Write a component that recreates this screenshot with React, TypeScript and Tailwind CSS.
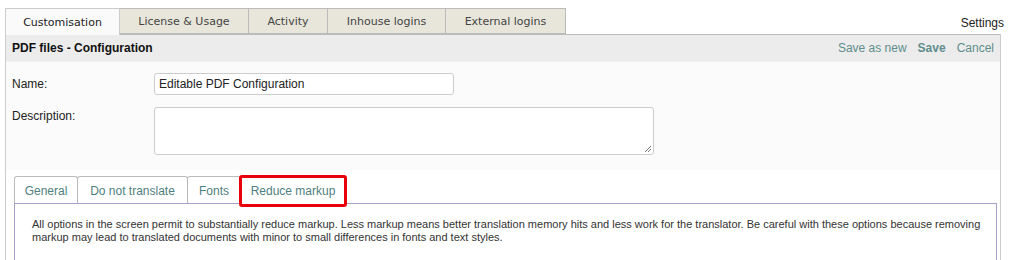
export default function App() {
  const topTabs = [
    { label: "Customisation", w: "w-[115px]", active: true },
    { label: "License & Usage", w: "w-[130px]" },
    { label: "Activity", w: "w-[80px]" },
    { label: "Inhouse logins", w: "w-[119px]" },
    { label: "External logins", w: "w-[121px]" },
  ];
  const subTabs = [
    { label: "General", w: "w-[64px]" },
    { label: "Do not translate", w: "w-[111px]" },
    { label: "Fonts", w: "w-[54px]" },
  ];

  return (
    <div className="w-[1010px] h-[260px] bg-white overflow-hidden font-['Liberation_Sans',Arial,sans-serif] text-[12px] text-[#222]">
      {/* top tabs */}
      <div className="flex items-end h-[34px] pl-[5px] pr-[6px]">
        {topTabs.map((t) => (
          <div
            key={t.label}
            className={`${t.w} h-[26px] flex items-center justify-center pt-[3px] border border-[#bbb] -ml-px first:ml-0 font-['DejaVu_Sans',Verdana,sans-serif] text-[11px] ${
              t.active
                ? "bg-[#fafafa] border-b-0 border-[#ccc] h-[27px] text-[#222] relative top-px"
                : "bg-[#e8e6da] text-[#444]"
            }`}
          >
            {t.label}
          </div>
        ))}
        <div className="ml-auto pb-[2px] text-[12px] text-[#222]">Settings</div>
      </div>

      <div className="ml-[5px] w-[996px] border-l border-r border-[#ccc]">
        {/* header bar */}
        <div className="h-[27px] bg-[#ececec] border-t border-[#bbb] flex items-center pl-[6px] pr-[6px]">
          <span className="font-bold text-[12px] text-[#111]">PDF files - Configuration</span>
          <div className="ml-auto flex items-center gap-[11px] text-[12px] text-[#5f8d8d]">
            <span>Save as new</span>
            <span className="font-bold">Save</span>
            <span>Cancel</span>
          </div>
        </div>

        {/* form */}
        <div className="bg-[#fbfbfb] h-[109px] pt-[11px] px-[6px] border-t border-[#f0f0f0]">
          <div className="flex items-center h-[22px]">
            <span className="w-[142px]">Name:</span>
            <div className="w-[300px] h-[22px] bg-white border border-[#ccc] rounded-[3px] flex items-center px-[4px]">
              Editable PDF Configuration
            </div>
          </div>
          <div className="flex mt-[12px]">
            <span className="w-[142px]">Description:</span>
            <div className="relative w-[500px] h-[48px] bg-white border border-[#ccc] rounded-[3px]">
              <svg className="absolute right-[1px] bottom-[1px]" width="8" height="8" viewBox="0 0 8 8">
                <path d="M7 1 L1 7 M7 4 L4 7" stroke="#777" strokeWidth="1" />
              </svg>
            </div>
          </div>
        </div>

        {/* sub tabs */}
        <div className="bg-white pt-[6px] pl-[8px] pr-[3px] pb-[14px]">
          <div className="flex items-end h-[27px]">
            {subTabs.map((t) => (
              <div
                key={t.label}
                className={`${t.w} h-[27px] flex items-center justify-center pt-px border border-b-0 border-[#bbb] -ml-px first:ml-0 rounded-t-[3px] bg-white text-[#4f8080] text-[12px]`}
              >
                {t.label}
              </div>
            ))}
            <div className="w-[108px] h-[32px] -ml-[2px] border-[3px] border-[#e8000b] rounded-[3px] flex items-center justify-center text-[#4f8080] text-[12px] relative top-[4px] z-10 bg-white">
              Reduce markup
            </div>
          </div>
          <div className="border border-[#a89fca] h-[60px] bg-white pl-[17px] pr-[4px] pt-[14px] text-[11px] leading-[13px] text-[#333]">
            All options in the screen permit to substantially reduce markup. Less markup means better translation memory hits and less work for the translator. Be careful with these options because removing markup may lead to translated documents with minor to small differences in fonts and text styles.
          </div>
        </div>
      </div>
    </div>
  );
}
